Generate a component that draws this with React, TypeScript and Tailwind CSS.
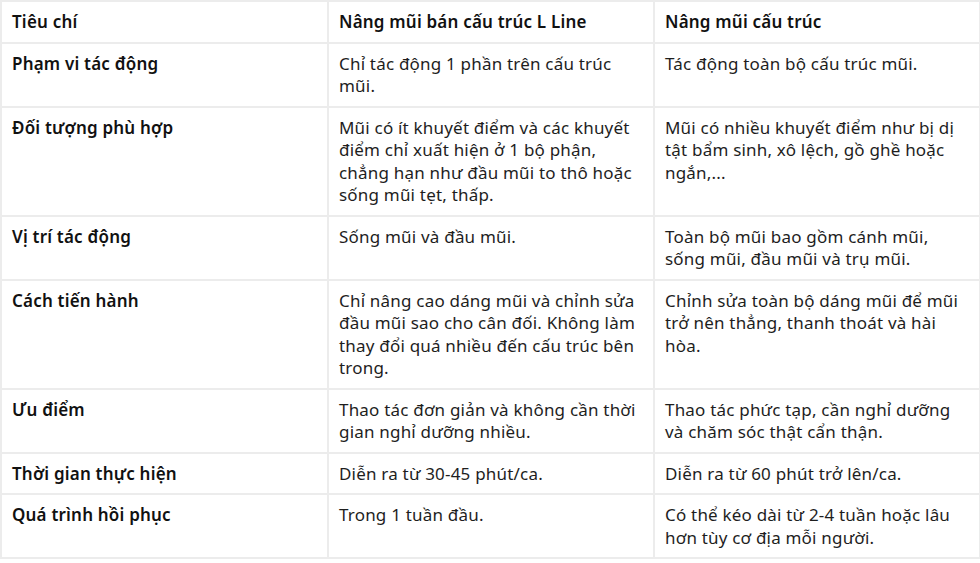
import React from 'react';

type Row = { label: string; semi: string; full: string };

// line breaks follow the original layout
const rows: Row[] = [
  {
    label: 'Phạm vi tác động',
    semi: 'Chỉ tác động 1 phần trên cấu trúc\nmũi.',
    full: 'Tác động toàn bộ cấu trúc mũi.',
  },
  {
    label: 'Đối tượng phù hợp',
    semi: 'Mũi có ít khuyết điểm và các khuyết\nđiểm chỉ xuất hiện ở 1 bộ phận,\nchẳng hạn như đầu mũi to thô hoặc\nsống mũi tẹt, thấp.',
    full: 'Mũi có nhiều khuyết điểm như bị dị\ntật bẩm sinh, xô lệch, gồ ghề hoặc\nngắn,...',
  },
  {
    label: 'Vị trí tác động',
    semi: 'Sống mũi và đầu mũi.',
    full: 'Toàn bộ mũi bao gồm cánh mũi,\nsống mũi, đầu mũi và trụ mũi.',
  },
  {
    label: 'Cách tiến hành',
    semi: 'Chỉ nâng cao dáng mũi và chỉnh sửa\nđầu mũi sao cho cân đối. Không làm\nthay đổi quá nhiều đến cấu trúc bên\ntrong.',
    full: 'Chỉnh sửa toàn bộ dáng mũi để mũi\ntrở nên thẳng, thanh thoát và hài\nhòa.',
  },
  {
    label: 'Ưu điểm',
    semi: 'Thao tác đơn giản và không cần thời\ngian nghỉ dưỡng nhiều.',
    full: 'Thao tác phức tạp, cần nghỉ dưỡng\nvà chăm sóc thật cẩn thận.',
  },
  {
    label: 'Thời gian thực hiện',
    semi: 'Diễn ra từ 30-45 phút/ca.',
    full: 'Diễn ra từ 60 phút trở lên/ca.',
  },
  {
    label: 'Quá trình hồi phục',
    semi: 'Trong 1 tuần đầu.',
    full: 'Có thể kéo dài từ 2-4 tuần hoặc lâu\nhơn tùy cơ địa mỗi người.',
  },
];

const cell =
  'border-2 border-[#ececec] align-top px-[10px] pt-[9px] pb-[8px] text-left whitespace-pre-line';

export default function App() {
  return (
    <div className="w-[980px] h-[563px] bg-white overflow-hidden font-['Noto_Sans',sans-serif] text-[17px] tracking-[0.2px] leading-[22.5px] text-[#1e1e1e]">
      <table className="w-[979px] border-collapse table-fixed">
        <colgroup>
          <col className="w-[327px]" />
          <col className="w-[326px]" />
          <col className="w-[326px]" />
        </colgroup>
        <thead>
          <tr>
            <th className={`${cell} font-semibold text-[#111]`}>Tiêu chí</th>
            <th className={`${cell} font-semibold text-[#111]`}>Nâng mũi bán cấu trúc L Line</th>
            <th className={`${cell} font-semibold text-[#111]`}>Nâng mũi cấu trúc</th>
          </tr>
        </thead>
        <tbody>
          {rows.map((r) => (
            <tr key={r.label}>
              <td className={`${cell} font-semibold text-[#111]`}>{r.label}</td>
              <td className={cell}>{r.semi}</td>
              <td className={cell}>{r.full}</td>
            </tr>
          ))}
        </tbody>
      </table>
    </div>
  );
}
